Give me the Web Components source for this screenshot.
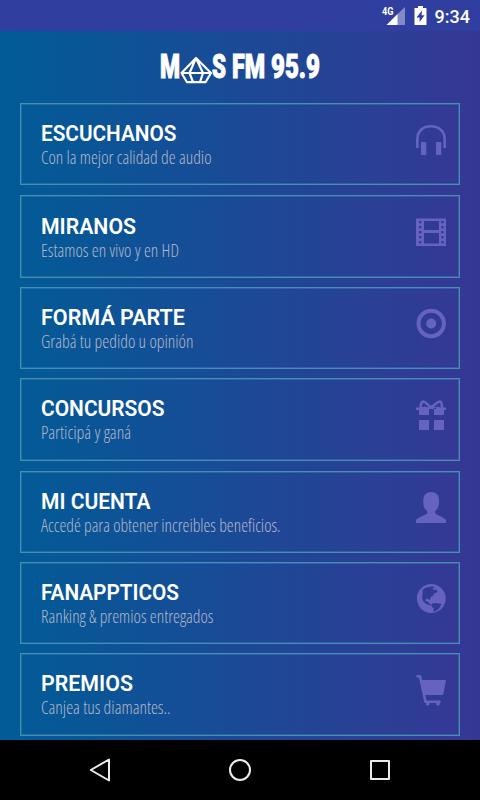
<!DOCTYPE html>
<html lang="es">
<head>
<meta charset="utf-8">
<title>Mas FM 95.9</title>
<style>
    html, body { margin: 0; height: 100%; }
    body { overflow: hidden; background: #000; }
</style>
</head>
<body>
<radio-app>
    <status-bar slot="status">9:34</status-bar>
    <brand-logo slot="logo"></brand-logo>

    <menu-card style="--h: 82px">
        <fit-text slot="title" width="135.5">ESCUCHANOS</fit-text>
        <fit-text slot="note" width="170.5">Con la mejor calidad de audio</fit-text>
        <menu-icon slot="icon" name="headphones"></menu-icon>
    </menu-card>
    <menu-card style="--h: 83px; --gap: 9px; --top: 16px">
        <fit-text slot="title" width="95">MIRANOS</fit-text>
        <fit-text slot="note" width="138">Estamos en vivo y en HD</fit-text>
        <menu-icon slot="icon" name="film"></menu-icon>
    </menu-card>
    <menu-card style="--h: 82px; --gap: 9px">
        <fit-text slot="title" width="144">FORMÁ PARTE</fit-text>
        <fit-text slot="note" width="152.5">Grabá tu pedido u opinión</fit-text>
        <menu-icon slot="icon" name="record"></menu-icon>
    </menu-card>
    <menu-card style="--h: 83px">
        <fit-text slot="title" width="123.5">CONCURSOS</fit-text>
        <fit-text slot="note" width="90">Participá y ganá</fit-text>
        <menu-icon slot="icon" name="gift"></menu-icon>
    </menu-card>
    <menu-card style="--h: 82px; --gap: 9px">
        <fit-text slot="title" width="109.5">MI CUENTA</fit-text>
        <fit-text slot="note" width="239.5">Accedé para obtener increibles beneficios.</fit-text>
        <menu-icon slot="icon" name="user"></menu-icon>
    </menu-card>
    <menu-card style="--h: 82px; --gap: 9px">
        <fit-text slot="title" width="138">FANAPPTICOS</fit-text>
        <fit-text slot="note" width="172.5">Ranking &amp; premios entregados</fit-text>
        <menu-icon slot="icon" name="globe"></menu-icon>
    </menu-card>
    <menu-card style="--h: 83px">
        <fit-text slot="title" width="92">PREMIOS</fit-text>
        <fit-text slot="note" width="129.5">Canjea tus diamantes..</fit-text>
        <menu-icon slot="icon" name="cart"></menu-icon>
    </menu-card>

    <nav-bar slot="nav"></nav-bar>
</radio-app>

<script>
class RadioApp extends HTMLElement {
    connectedCallback() {
        this.attachShadow({ mode: "open" }).innerHTML = `
            <style>
                :host {
                    display: flex;
                    flex-direction: column;
                    height: 100vh;
                    overflow: hidden;
                }
                main {
                    flex: 1;
                    min-height: 0;
                    overflow: hidden;
                    background: linear-gradient(to right, #005c97, #363795);
                }
                .list {
                    display: flex;
                    flex-direction: column;
                    padding: 0 20px;
                }
            </style>
            <slot name="status"></slot>
            <main>
                <slot name="logo"></slot>
                <div class="list"><slot></slot></div>
            </main>
            <slot name="nav"></slot>
        `;
    }
}

class StatusBar extends HTMLElement {
    connectedCallback() {
        this.attachShadow({ mode: "open" }).innerHTML = `
            <style>
                :host {
                    display: flex;
                    flex: none;
                    justify-content: flex-end;
                    box-sizing: border-box;
                    height: 31px;
                    padding-right: 10px;
                    background: #303f9f;
                    color: #fff;
                    font: 500 18px/33px Roboto, sans-serif;
                }
                svg { display: block; margin-right: 7px; }
                .net { font: 700 10px Roboto, sans-serif; }
            </style>
            <svg width="46" height="31" fill="#fff">
                <text class="net" x="0" y="15" textLength="11.5" lengthAdjust="spacingAndGlyphs">4G</text>
                <path d="M15 14.5 L23 7 V25 H15Z" opacity=".4"/>
                <path d="M4.5 25 L15.5 14 V25Z"/>
                <path fill-rule="evenodd" d="M36 6h5v2h3.500v17h-12V8H36z M40 10.500 L34.500 17.500 H37.600 V22 L42.600 15.200 H39.600z"/>
            </svg>
            <slot></slot>
        `;
    }
}

class BrandLogo extends HTMLElement {
    connectedCallback() {
        this.attachShadow({ mode: "open" }).innerHTML = `
            <style>
                :host {
                    display: flex;
                    justify-content: center;
                    box-sizing: border-box;
                    height: 72px;
                    padding-top: 16px;
                    color: #fff;
                    font: 900 33px/40px Roboto, sans-serif;
                    -webkit-text-stroke: 1px #fff;
                }
                svg { display: block; margin: 8px 0 0; }
                path { fill: none; stroke: #fff; stroke-width: 2.2; stroke-linejoin: round; }
                .word { margin-left: 6px; }
            </style>
            <fit-text width="20">M</fit-text>
            <svg width="32" height="30"><path d="M16 3 L1.500 18 L7 27.200 H25.500 L31 18Z M2 18 H31 M16 3 L9.500 18 L13 27 M16 3 L23 18 L20 27"/></svg>
            <fit-text width="14">S</fit-text>
            <fit-text class="word" width="33">FM</fit-text>
            <fit-text class="word" width="49">95.9</fit-text>
        `;
    }
}

class MenuCard extends HTMLElement {
    connectedCallback() {
        this.attachShadow({ mode: "open" }).innerHTML = `
            <style>
                :host {
                    display: flex;
                    flex: none;
                    justify-content: space-between;
                    box-sizing: border-box;
                    height: var(--h);
                    margin-bottom: var(--gap, 10px);
                    padding: 0 13px 0 20px;
                    border: 1px solid #468fb3;
                    box-shadow: inset 0 0 0 1px rgba(70, 143, 179, .4);
                }
                div { padding-top: var(--top, 15px); }
                ::slotted([slot="title"]) {
                    height: 26px;
                    color: #fff;
                    font: 600 22.500px/28px Roboto, sans-serif;
                }
                ::slotted([slot="note"]) {
                    height: 24px;
                    color: #b3b6c8;
                    font: 340 18px/24px "Open Sans", sans-serif;
                    font-stretch: 75%;
                }
                ::slotted([slot="icon"]) { margin-top: 21px; }
            </style>
            <div>
                <slot name="title"></slot>
                <slot name="note"></slot>
            </div>
            <slot name="icon"></slot>
        `;
    }
}

const ICONS = {
    headphones: `
        <path d="M1.300 23 V15 C1.300 6 7 1.300 15 1.300 S28.700 6 28.700 15 V23" fill="none" stroke="currentColor" stroke-width="2.600"/>
        <rect x="5" y="17" width="5.300" height="13" rx=".7"/>
        <rect x="20" y="17" width="5.300" height="13" rx=".7"/>`,
    film: `
        <path fill-rule="evenodd" d="M0 1.500h30v27.500H0z M8 4v9h15V4z M8 16v10.500h15V16z
            M3 4v2.300h2.300V4z M3 9v2.300h2.300V9z M3 14v2.300h2.300V14z M3 19v2.300h2.300V19z M3 24v2.300h2.300V24z
            M25.300 4v2.300h2.300V4z M25.300 9v2.300h2.300V9z M25.300 14v2.300h2.300V14z M25.300 19v2.300h2.300V19z M25.300 24v2.300h2.300V24z"/>`,
    record: `
        <circle cx="15.200" cy="14.500" r="12.700" fill="none" stroke="currentColor" stroke-width="4"/>
        <circle cx="15.200" cy="14.500" r="5"/>`,
    gift: `
        <path d="M4.500 8.500 C4.500 5 5.500 1.800 7.500 1.500 C9.500 1.300 12 6 15 7 C18 6 21.500 1.300 24 1.500 C26 1.800 26 5 26 8.500" fill="none" stroke="currentColor" stroke-width="2.600"/>
        <path d="M0 7.500h5 L9 6.500 L13 8.500 V15H3V10H0z M30 7.500h-5 L21 6.500 L18 8.500 V15H28V10h2z M11 7h9v2h-9z"/>
        <rect x="3" y="20" width="10" height="10"/>
        <rect x="18" y="20" width="10" height="10"/>`,
    user: `
        <path d="M15.200 -1 C20 -1 23 2 23 7 V10 C23 14 21 16.500 19.300 18 V20.500 C22 22.500 28 24.500 30 27 V30 H0 V27 C2 24.500 8.500 22.500 11.300 20.500 V18 C9 16.500 7.300 14 7.300 10 V7 C7.300 2 10.500 -1 15.200 -1z"/>`,
    globe: `
        <path fill-rule="evenodd" d="M15.300 0a14.500 14.500 0 1 0 .01 0z
            M6.500 6 L10 3.500 L12.500 3 L15 2.500 L19.500 3 L16.500 4.500 L17.500 6 L20.500 5.500 L21.500 8 L18 9.500 L17 12 L14.500 13 L14 16 L11 14.500 L9 16 L10.500 17.500 L12 17.500 L13 19.500 L15.500 20.500 L14.500 21.500 L10 20 L7 17 L6 14 L6.500 11z
            M16 19.500 L20 19 L25.500 20 L23 24.500 L19 27.500 L17 27 L18 24.500 L15.500 22.500z"/>`,
    cart: `
        <path d="M1.500 1.300 H4 L9.500 26.700 H23.500" fill="none" stroke="currentColor" stroke-width="2.600" stroke-linecap="round" stroke-linejoin="round"/>
        <path d="M5 5 H30 L27.500 18.500 Q27.200 20 25.500 20 H9z"/>
        <rect x="10" y="27" width="3.300" height="3.500" rx="1.300"/>
        <rect x="20.300" y="27" width="3.300" height="3.500" rx="1.300"/>`
};

class MenuIcon extends HTMLElement {
    connectedCallback() {
        this.attachShadow({ mode: "open" }).innerHTML = `
            <style>
                :host { display: block; width: 30px; height: 31px; color: #6563bf; }
                svg { display: block; fill: currentColor; overflow: visible; }
            </style>
            <svg width="30" height="31">${ICONS[this.getAttribute("name")]}</svg>
        `;
    }
}

class NavBar extends HTMLElement {
    connectedCallback() {
        this.attachShadow({ mode: "open" }).innerHTML = `
            <style>
                :host {
                    display: flex;
                    flex: none;
                    justify-content: center;
                    gap: 110px;
                    height: 60px;
                    background: #000;
                    align-items: center;
                }
                svg { fill: none; stroke: #ececec; stroke-width: 2; stroke-linejoin: round; }
            </style>
            <svg width="30" height="30"><path d="M24 4.500 V25.500 L5.800 15z"/></svg>
            <svg width="30" height="30"><circle cx="15" cy="15" r="10"/></svg>
            <svg width="30" height="30"><rect x="6" y="6" width="18" height="18"/></svg>
        `;
    }
}

// one line of text squeezed or stretched to the given width
class FitText extends HTMLElement {
    connectedCallback() {
        this.attachShadow({ mode: "open" }).innerHTML = `
            <style>
                :host { display: block; white-space: nowrap; }
                span { display: inline-block; transform-origin: 0 0; }
            </style>
            <span><slot></slot></span>
        `;
        let span = this.shadowRoot.querySelector("span");
        let width = this.getAttribute("width");
        let scale = width / span.getBoundingClientRect().width;
        span.style.transform = `scaleX(${scale})`;
        this.style.width = `${width}px`;
    }
}

customElements.define("radio-app", RadioApp);
customElements.define("status-bar", StatusBar);
customElements.define("brand-logo", BrandLogo);
customElements.define("menu-card", MenuCard);
customElements.define("menu-icon", MenuIcon);
customElements.define("nav-bar", NavBar);
// last, because it measures with the font its card gives it
customElements.define("fit-text", FitText);
</script>
</body>
</html>
